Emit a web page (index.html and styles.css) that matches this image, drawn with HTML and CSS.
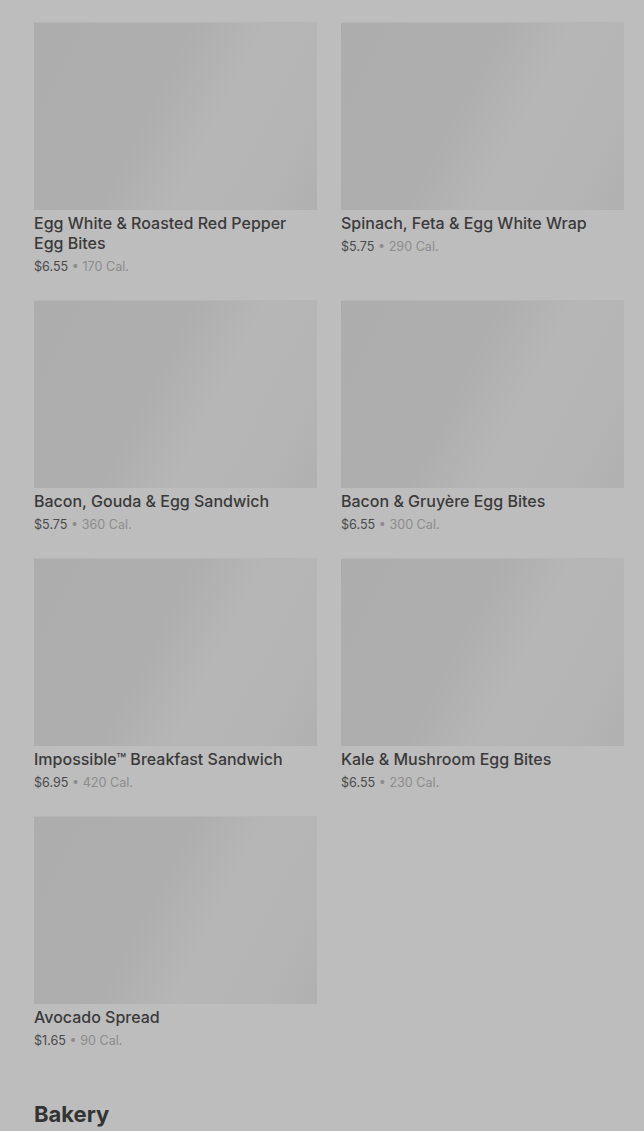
FILE: index.html
```html
<html>
  <head>
    <title>Menu - Breakfast</title>
    <link rel="stylesheet" href="styles.css">
  </head>
  <body>
    <div id="menuFrame">
      <div class="grid">
        <div class="item">
          <div class="pic"></div>
          <div class="name">Egg White &amp; Roasted Red Pepper Egg Bites</div>
          <div class="meta"><span class="price">$6.55</span> &bull; 170 Cal.</div>
        </div>
        <div class="item">
          <div class="pic"></div>
          <div class="name">Spinach, Feta &amp; Egg White Wrap</div>
          <div class="meta"><span class="price">$5.75</span> &bull; 290 Cal.</div>
        </div>
        <div class="item">
          <div class="pic"></div>
          <div class="name">Bacon, Gouda &amp; Egg Sandwich</div>
          <div class="meta"><span class="price">$5.75</span> &bull; 360 Cal.</div>
        </div>
        <div class="item">
          <div class="pic"></div>
          <div class="name">Bacon &amp; Gruyère Egg Bites</div>
          <div class="meta"><span class="price">$6.55</span> &bull; 300 Cal.</div>
        </div>
        <div class="item">
          <div class="pic"></div>
          <div class="name">Impossible™ Breakfast Sandwich</div>
          <div class="meta"><span class="price">$6.95</span> &bull; 420 Cal.</div>
        </div>
        <div class="item">
          <div class="pic"></div>
          <div class="name">Kale &amp; Mushroom Egg Bites</div>
          <div class="meta"><span class="price">$6.55</span> &bull; 230 Cal.</div>
        </div>
        <div class="item">
          <div class="pic"></div>
          <div class="name">Avocado Spread</div>
          <div class="meta"><span class="price">$1.65</span> &bull; 90 Cal.</div>
        </div>
      </div>
      <h2 class="section">Bakery</h2>
    </div>
  </body>
</html>
```

FILE: styles.css
```css
body {
  margin: 0;
  background-color: #bdbdbd;
  font-family: Inter, "Liberation Sans", sans-serif;
  overflow: hidden;
}

#menuFrame {
  padding: 22px 20px 0 34px;
}

.grid {
  display: grid;
  grid-template-columns: 283px 283px;
  column-gap: 24px;
  row-gap: 23px;
  align-items: start;
}

.pic {
  height: 188px;
  background: linear-gradient(117deg, #adadad 0%, #aeaeae 42%, #b6b6b6 62%, #b5b5b5 84%, #b0b0b0 100%);
  border-top: 1px solid #b6b6b6;
  box-sizing: border-box;
}

.name {
  margin-top: 3px;
  font-size: 16px;
  line-height: 20px;
  font-weight: 500;
  color: #3a3a3a;
}

.meta {
  margin-top: 4px;
  font-size: 12.6px;
  line-height: 20px;
  color: #8c8c8c;
}

.price {
  color: #4a4a4a;
}

.section {
  margin: 49px 0 0 0;
  font-size: 22px;
  line-height: 28px;
  font-weight: 700;
  color: #333333;
}
```
